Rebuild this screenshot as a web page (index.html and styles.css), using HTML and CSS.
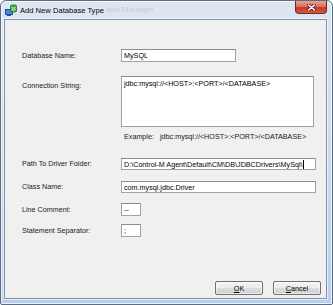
FILE: index.html
```html
<!DOCTYPE html>
<html lang="en">
<head>
<meta charset="UTF-8">
<title>Add New Database Type</title>
<link rel="stylesheet" href="styles.css">
</head>
<body>
    <div class="window">
        <div class="titlebar">
            <svg class="app-icon" width="12" height="12" viewBox="0 0 12 12">
                <rect x="0.5" y="5.5" width="7" height="5" fill="#4a86d6" stroke="#1d4f9c"/>
                <rect x="2" y="10.5" width="4" height="1.5" fill="#1d4f9c"/>
                <path d="M5.5 1.8 C5.5 0.6 11.5 0.6 11.5 1.8 L11.5 7.2 C11.5 8.4 5.5 8.4 5.5 7.2 Z" fill="#3caa3c" stroke="#1f6e1f" stroke-width="0.8"/>
                <path d="M6.5 3.6 C7.5 4.3 9.5 4.3 10.5 3.6 M6.5 5.6 C7.5 6.3 9.5 6.3 10.5 5.6" fill="none" stroke="#fff" stroke-width="0.9"/>
            </svg>
            <span class="title">Add New Database Type</span>
            <span class="ghost">tion Manager</span>
            <div class="close">
                <svg width="9" height="7" viewBox="0 0 9 7">
                    <path d="M1.5 1 L7.5 6 M7.5 1 L1.5 6" stroke="#5a1a10" stroke-width="3" stroke-linecap="round"/>
                    <path d="M1.5 1 L7.5 6 M7.5 1 L1.5 6" stroke="#fff" stroke-width="1.6" stroke-linecap="round"/>
                </svg>
            </div>
        </div>

        <div class="client">
            <div class="row row-name">
                <span class="label">Database Name:</span>
                <div class="textbox box-name">MySQL</div>
            </div>
            <div class="row row-conn">
                <span class="label label-top">Connection String:</span>
                <div class="textbox box-conn">jdbc:mysql://&lt;HOST&gt;:&lt;PORT&gt;/&lt;DATABASE&gt;</div>
            </div>
            <div class="example">
                <span class="example-key">Example:</span>jdbc:mysql://&lt;HOST&gt;:&lt;PORT&gt;/&lt;DATABASE&gt;
            </div>
            <div class="row row-path">
                <span class="label">Path To Driver Folder:</span>
                <div class="textbox box-wide">D:\Control-M Agent\Default\CM\DB\JDBCDrivers\MySql\<span class="caret"></span></div>
            </div>
            <div class="row row-class">
                <span class="label">Class Name:</span>
                <div class="textbox box-wide">com.mysql.jdbc.Driver</div>
            </div>
            <div class="row row-comment">
                <span class="label">Line Comment:</span>
                <div class="textbox box-small">--</div>
            </div>
            <div class="row row-sep">
                <span class="label">Statement Separator:</span>
                <div class="textbox box-small">;</div>
            </div>

            <div class="buttons">
                <button class="btn" type="button"><u>O</u>K</button>
                <button class="btn" type="button"><u>C</u>ancel</button>
            </div>
        </div>
    </div>
</body>
</html>
```

FILE: styles.css
```css
body {
    margin: 0;
    background: #fff;
    font-family: "Liberation Sans", Arial, sans-serif;
}

.window {
    box-sizing: border-box;
    width: 333px;
    height: 305px;
    display: flex;
    flex-direction: column;
    padding: 0 5px 5px 3px;
    border: 1px solid #5d6d80;
    border-radius: 6px 6px 2px 2px;
    background: linear-gradient(180deg, #dde6f1 0, #d2e0f0 30%, #c2d7ef 70%, #b8d0ed 100%);
    box-shadow: inset 0 0 0 1px rgba(255, 255, 255, 0.7);
}

.titlebar {
    position: relative;
    height: 18px;
    margin: 0 -5px 0 -3px;
    padding-left: 4px;
    display: flex;
    align-items: center;
}

.app-icon {
    margin-right: 3px;
}

.title {
    font-size: 7.6px;
    color: #000;
    text-shadow: 0 0 4px rgba(255, 255, 255, 0.9);
}

.ghost {
    position: absolute;
    left: 106px;
    top: 4px;
    font-size: 8px;
    color: rgba(40, 55, 80, 0.15);
    filter: blur(0.7px);
}

.close {
    position: absolute;
    right: 5px;
    top: 0;
    width: 32px;
    height: 13px;
    display: flex;
    align-items: center;
    justify-content: center;
    border: 1px solid #6e2a22;
    border-top: none;
    border-radius: 0 0 4px 4px;
    box-sizing: border-box;
    background: linear-gradient(180deg, #e9a08e 0, #d9735e 45%, #c43a25 55%, #d35a42 100%);
}

.client {
    flex: 1;
    display: flex;
    flex-direction: column;
    padding: 29px 5px 3px 17px;
    background: #f0f0f0;
    border: 1px solid #8193aa;
    box-shadow: 0 0 0 1px rgba(255, 255, 255, 0.6);
    font-size: 7.2px;
    color: #1a1a1a;
}

.row {
    display: flex;
    align-items: center;
}

.label {
    width: 99px;
    line-height: 10px;
}

.row-conn {
    align-items: flex-start;
    margin-top: 14px;
}

.label-top {
    padding-top: 5px;
}

.row-path { margin-top: 16px; }
.row-class { margin-top: 11px; }
.row-comment { margin-top: 10px; }
.row-sep { margin-top: 8px; }

.textbox {
    box-sizing: border-box;
    background: #fff;
    border: 1px solid #a2a2a2;
    border-top-color: #8c8c8c;
    padding: 0 2px;
    color: #000;
    white-space: nowrap;
    overflow: hidden;
    display: flex;
    align-items: center;
}

.box-name {
    width: 115px;
    height: 13px;
}

.box-conn {
    width: 193px;
    height: 51px;
    align-items: flex-start;
    padding-top: 2px;
}

.box-wide {
    width: 195px;
    height: 12px;
}

.box-small {
    width: 20px;
    height: 13px;
}

.caret {
    width: 1px;
    height: 9px;
    background: #000;
}

.example {
    margin: 5px 0 0 102px;
    line-height: 10px;
}

.example-key {
    margin-right: 6px;
}

.buttons {
    margin-top: auto;
    display: flex;
    justify-content: flex-end;
    gap: 10px;
}

.btn {
    width: 48px;
    height: 14px;
    padding: 0;
    font-family: "Liberation Sans", Arial, sans-serif;
    font-size: 7.2px;
    color: #000;
    border: 1px solid #707070;
    border-radius: 2px;
    background: linear-gradient(180deg, #f4f4f4 0, #ebebeb 48%, #dddddd 52%, #cfcfcf 100%);
    box-shadow: inset 0 0 0 1px rgba(255, 255, 255, 0.6);
}
```
